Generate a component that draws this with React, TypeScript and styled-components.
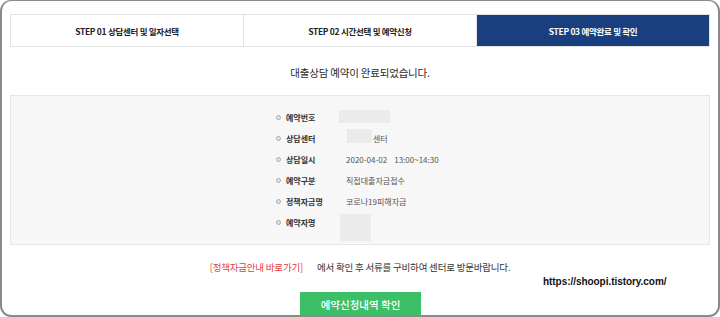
import React from "react";
import styled, { createGlobalStyle } from "styled-components";

const GlobalStyle = createGlobalStyle`
  html, body {
    margin: 0;
    padding: 0;
    background: #ffffff;
  }
  * {
    box-sizing: border-box;
  }
`;

const steps = [
  { label: "STEP 01 상담센터 및 일자선택", active: false },
  { label: "STEP 02 시간선택 및 예약신청", active: false },
  { label: "STEP 03 예약완료 및 확인", active: true },
];

type Row = {
  label: string;
  text?: string;
  blank?: { w: number; h: number; shift: number; top: number };
  suffix?: string;
};

const rows: Row[] = [
  { label: "예약번호", blank: { w: 51, h: 13, shift: -7, top: 3 } },
  { label: "상담센터", blank: { w: 25, h: 14, shift: 1, top: 1 }, suffix: "센터" },
  { label: "상담일시", text: "2020-04-02\u00a0\u00a0\u00a0\u00a013:00~14:30" },
  { label: "예약구분", text: "직접대출자금접수" },
  { label: "정책자금명", text: "코로나19피해자금" },
  { label: "예약자명", blank: { w: 31, h: 27, shift: -6, top: 2 } },
];

/** 예약완료 화면 */
export default function App() {
  return (
    <>
      <GlobalStyle />
      <Frame>
        <Tabs>
          {steps.map((s) => (
            <Tab key={s.label} $active={s.active}>
              {s.label}
            </Tab>
          ))}
        </Tabs>
        <Headline>대출상담 예약이 완료되었습니다.</Headline>
        <InfoBox>
          <List>
            {rows.map((r) => (
              <InfoRow key={r.label}>
                <Bullet />
                <Label>{r.label}</Label>
                <Value>
                  {r.blank && (
                    <Blank
                      $w={r.blank.w}
                      $h={r.blank.h}
                      $shift={r.blank.shift}
                      $top={r.blank.top}
                    />
                  )}
                  {r.text}
                  {r.suffix && <Suffix>{r.suffix}</Suffix>}
                </Value>
              </InfoRow>
            ))}
          </List>
        </InfoBox>
        <Notice>
          <LinkText>[정책자금안내 바로가기]</LinkText>
          <span>에서 확인 후 서류를 구비하여 센터로 방문바랍니다.</span>
        </Notice>
        <ButtonRow>
          <ConfirmButton>예약신청내역 확인</ConfirmButton>
        </ButtonRow>
        <Watermark>https://shoopi.tistory.com/</Watermark>
      </Frame>
    </>
  );
}

const Frame = styled.div`
  position: relative;
  width: 720px;
  height: 317px;
  border: 2px solid #8a8a8a;
  border-top-width: 1px;
  border-radius: 11px;
  overflow: hidden;
  padding: 13px 8px 0 8px;
  font-family: "Noto Sans CJK KR", "Noto Sans", sans-serif;
  color: #333333;
  background: #ffffff;
`;

const Tabs = styled.div`
  display: flex;
  height: 33px;
  border: 1px solid #e2e2e2;
`;

const Tab = styled.div<{ $active: boolean }>`
  flex: 1;
  display: flex;
  align-items: center;
  justify-content: center;
  font-size: 8.5px;
  font-weight: 700;
  letter-spacing: -0.3px;
  color: ${(p) => (p.$active ? "#ffffff" : "#222222")};
  background: ${(p) => (p.$active ? "#1a3f7e" : "#ffffff")};
  & + & {
    border-left: 1px solid #e2e2e2;
  }
`;

const Headline = styled.div`
  height: 48px;
  display: flex;
  align-items: center;
  justify-content: center;
  font-size: 10.5px;
  color: #2a2a2a;
  letter-spacing: -0.2px;
  padding-top: 2px;
`;

const InfoBox = styled.div`
  height: 150px;
  background: #f7f7f7;
  border: 1px solid #e6e6e6;
  padding: 11px 0 0 265px;
`;

const List = styled.div`
  display: flex;
  flex-direction: column;
`;

const InfoRow = styled.div`
  display: flex;
  align-items: flex-start;
  min-height: 21px;
`;

const Bullet = styled.span`
  width: 5px;
  height: 5px;
  margin-top: 8px;
  border: 1px solid #aaaaaa;
  background: #e4e4e4;
  border-radius: 50%;
  flex-shrink: 0;
`;

const Label = styled.span`
  width: 60px;
  margin-left: 5px;
  line-height: 21px;
  font-size: 8px;
  font-weight: 700;
  color: #333333;
`;

const Value = styled.span`
  display: flex;
  align-items: flex-start;
  line-height: 21px;
  font-size: 8px;
  color: #555555;
`;

const Blank = styled.span<{ $w: number; $h: number; $shift: number; $top: number }>`
  display: block;
  width: ${(p) => p.$w}px;
  height: ${(p) => p.$h}px;
  margin-left: ${(p) => p.$shift}px;
  margin-top: ${(p) => p.$top}px;
  background: #ebebeb;
`;

const Suffix = styled.span`
  margin-left: 1px;
`;

const Notice = styled.div`
  display: flex;
  justify-content: center;
  gap: 14px;
  padding-top: 15px;
  height: 47px;
  font-size: 9.5px;
  color: #333333;
  letter-spacing: -0.2px;
`;

const LinkText = styled.span`
  color: #e8413f;
`;

const ButtonRow = styled.div`
  display: flex;
  justify-content: center;
  padding-left: 1px;
`;

const ConfirmButton = styled.button`
  width: 121px;
  height: 26px;
  border: none;
  background: #3cbf67;
  color: #ffffff;
  font-family: inherit;
  font-size: 10.5px;
  font-weight: 500;
  padding: 0 0 2px;
`;

const Watermark = styled.div`
  position: absolute;
  left: 541px;
  top: 275px;
  font-family: "Liberation Sans", Arial, sans-serif;
  font-size: 10px;
  font-weight: 700;
  color: #111111;
  letter-spacing: -0.05px;
`;
